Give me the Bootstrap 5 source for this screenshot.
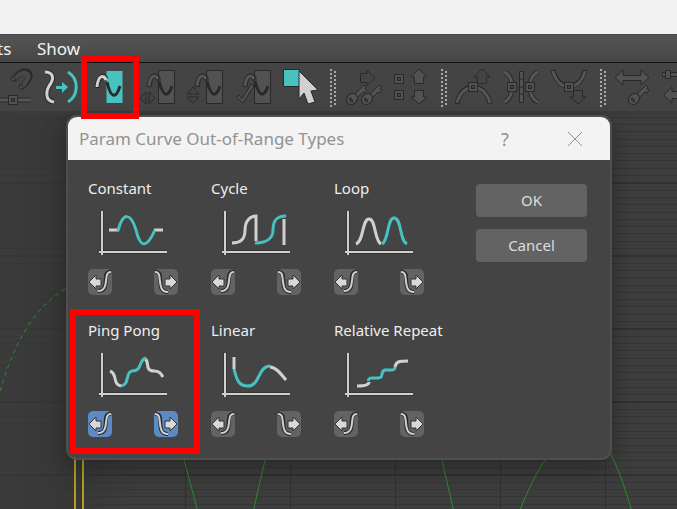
<!DOCTYPE html>
<html lang="en">
<head>
<meta charset="utf-8">
<meta name="viewport" content="width=device-width, initial-scale=1">
<title>Param Curve Out-of-Range Types</title>
<link href="https://cdn.jsdelivr.net/npm/bootstrap@5.3.0/dist/css/bootstrap.min.css" rel="stylesheet">
<style>
body{background:#3b3b3b;font-family:"Noto Sans","Open Sans",sans-serif;font-size:15px;color:#eee}
.window-strip{height:34px;background:#f2f2f2}
.menu-strip{height:29px;background:linear-gradient(#555,#464646);border-top:1px solid #484848;border-bottom:1px solid #111}
.menu-strip a{font-size:17px;line-height:27px;color:#f2f2f2}
.menu-strip a:first-child{width:37px;text-indent:-3px}
.tool-strip{height:52px;background:linear-gradient(#444 0 48px,#3b3b3b 48px)}
.tool-row{margin-left:-12px}
.tool{width:48px;height:48px}
.tool svg,.divider svg{display:block;fill:none}
.divider{width:15px}
.w{stroke:#d0d0d0}.t{stroke:#48c1c1}.k{stroke:#292929}.g{stroke:#555}
.fw{fill:#d0d0d0}.ft{fill:#48c1c1}.fg{fill:#525252}.fd{fill:#444}
.s1{stroke-width:1}.s3{stroke-width:3}.s5{stroke-width:5}
.editor{overflow:hidden}
.graph-bg{position:absolute;top:0;left:0}
.red-frame{position:absolute;border:6px solid #f00;pointer-events:none;z-index:5}
.tool-frame{inset:-8px -7px -8px -3px}
.cell-frame{inset:-9px 11px 6px -18px}
.tool-window{position:absolute;left:66px;top:115px;width:546px;background:#444;border:2px solid #4f4f4f;border-radius:11px;box-shadow:0 10px 24px rgba(0,0,0,.3);background-clip:padding-box}
.title-row{height:43px;background:#f3f3f3;border-radius:9px 9px 0 0;padding:0 24px 0 11px}
.title-row h1{font-size:17px;line-height:42px;color:#929292;font-weight:400}
.title-row button{color:#929292;width:22px;height:40px;font-size:18px;line-height:40px}
.title-row .help-btn{margin-right:48px}
.window-body{height:298px;padding:16px 23px 0 20px}
.types{display:grid;grid-template-columns:repeat(3,123px);grid-auto-rows:142px}
.type-cell{min-width:0}
.type-cell h2{font-size:15px;line-height:24px;margin:0 0 11px;font-weight:400;white-space:nowrap}
.plot{display:block;margin:0 0 14px 11px;fill:none}
.dir{width:24px;height:26px;background:#636363;border-radius:5px}
.dir.on{background:#5d8ac4}
.dir svg{display:block}
.dirs{gap:42px}
.dlg-btn{width:111px;height:33px;background:#636363;color:#ddd;border-radius:4px;font-size:15px;line-height:33px}
.actions{gap:12px;padding-top:8px}
</style>
</head>
<body class="d-flex flex-column min-vh-100 position-relative">
<svg width="0" height="0" class="position-absolute" aria-hidden="true">
<defs>
<g id="axes"><path d="M3 0V45M0 41H68" stroke="#272727" stroke-width="4" opacity=".5"/><path d="M3 0V44M0 41H68" stroke="#d0d0d0" stroke-width="2"/></g>
<g id="pre" fill="none"><path d="M23 3C12 2 24 22 10 22" stroke="#292929" stroke-width="4"/><path d="M23 3C14 2 23 22 10 22" stroke="#d0d0d0" stroke-width="2"/><path d="M1 13L8 6V10H13V17H8V20Z" fill="#d8d8d8" stroke="#333"/></g>
<g id="post" fill="none"><path d="M1 3C12 2 0 23 14 23" stroke="#292929" stroke-width="4"/><path d="M1 3C10 2 1 23 14 23" stroke="#d0d0d0" stroke-width="2"/><path d="M23 13L16 6V10H11V17H16V20Z" fill="#d8d8d8" stroke="#333"/></g>
<g id="key"><path d="M9 12L19 2L21 4L20 6L22 7L20 10L18 9L12 15" class="k fg"/><ellipse cx="7" cy="16" rx="6" ry="5" transform="rotate(-45 7 16)" class="k fg"/><ellipse cx="6" cy="17" rx="2" ry="1" transform="rotate(45 6 17)" class="k fd"/></g>
<g id="knot"><rect x=".5" y=".5" width="9" height="9" class="k fg" stroke-width="1"/><rect x="3.5" y="3.5" width="3" height="3" class="k fd"/></g>
<g id="dots"><path d="M7 6V44" stroke="#aaa" stroke-width="2" stroke-dasharray="2 2"/><path d="M11 8V44" stroke="#aaa" stroke-width="2" stroke-dasharray="2 2"/></g>
<linearGradient id="shade"><stop offset="0" stop-color="#3a3a3a" stop-opacity=".6"/><stop offset=".1" stop-color="#353535" stop-opacity=".75"/><stop offset=".2" stop-color="#353535" stop-opacity="0"/></linearGradient>
<pattern id="rules" width="105" height="73" x="80" y="-6" patternUnits="userSpaceOnUse">
<path d="M0 8.5H105M0 15.5H105M0 22.500H105M0 30.500H105M0 37.500H105M0 44.500H105M0 51.500H105M0 59.500H105M0 66.500H105" stroke="#343434"/><path d="M0 1H105" stroke="#303030" stroke-width="2"/><path d="M.5 0V73" stroke="#2f2f2f"/></pattern>
</defs></svg>

<header class="window-strip"></header>
<nav class="menu-strip d-flex" aria-label="Menu"><a href="#" class="text-decoration-none">ts</a><a href="#" class="text-decoration-none">Show</a></nav>
<div class="tool-strip">
<div class="tool-row d-flex" role="toolbar" aria-label="Curve tools">
<button class="tool btn p-0 border-0 flex-shrink-0" aria-label="Snap"><svg width="48" height="48" viewBox="-12 63 48 48"><path d="M13 80L20 73C26 68 33 74 28 80L21 88" class="k" stroke-width="6"/><path d="M14 79L20 74C26 70 31 75 27 80L22 87" stroke="#484848" stroke-width="4"/><circle cx="13" cy="79" r="2" class="k fg"/><circle cx="21" cy="87" r="2" class="k fg"/><path d="M0 100H31" class="k s5"/><path d="M0 100H31" class="g s3"/><use href="#knot" x="8" y="95"/></svg></button>
<button class="tool btn p-0 border-0 flex-shrink-0" aria-label="Region"><svg width="48" height="48" viewBox="36 63 48 48"><path d="M45 72C53 72 54 78 51 83C45 91 45 101 54 102" class="k s5"/><path d="M45 72C53 72 54 78 51 83C45 91 45 101 54 102" class="w s3"/><path d="M68 72C79 79 79 95 68 102" class="t s3"/><path d="M56 86H62V82L68 87L62 93V89H56Z" class="ft"/></svg></button>
<div class="position-relative flex-shrink-0"><button class="tool btn p-0 border-0" aria-label="Parameter curve out-of-range types"><svg width="48" height="48" viewBox="84 63 48 48"><path d="M106.500 71H122.500V103H106.500Z" class="ft"/><path d="M97 88C98 75 104 74 106 79" class="k s5"/><path d="M97 87C98 75 104 74 106 80" class="w s3"/><path d="M107 82C111 99 116 99 120 86" class="k s3"/></svg></button><span class="red-frame tool-frame"></span></div>
<button class="tool btn p-0 border-0 flex-shrink-0" aria-label="Scale horizontally"><svg width="48" height="48" viewBox="132 63 48 48"><path d="M158.500 70.500H174.500V103.500H158.500Z" class="k fg"/><path d="M149 87C150 76 155 72 159 80" class="k s5"/><path d="M149 86C150 76 155 73 158 79" class="g s3"/><path d="M159 81C163 97 168 98 172 86" class="k s3"/><path d="M140 98L146 92V104ZM155 98L149 92V104Z" class="k fd"/></svg></button>
<button class="tool btn p-0 border-0 flex-shrink-0" aria-label="Scale vertically"><svg width="48" height="48" viewBox="180 63 48 48"><path d="M206.500 70.500H222.500V103.500H206.500Z" class="k fg"/><path d="M197 87C198 76 203 72 207 80" class="k s5"/><path d="M197 86C198 76 203 73 206 79" class="g s3"/><path d="M207 81C211 97 216 98 220 86" class="k s3"/><path d="M193 87L187 94H199ZM193 103L187 97H199Z" class="k fd"/></svg></button>
<button class="tool btn p-0 border-0 flex-shrink-0" aria-label="Apply curve"><svg width="48" height="48" viewBox="228 63 48 48"><path d="M254.500 70.500H270.500V103.500H254.500Z" class="k fg"/><path d="M245 87C246 76 251 72 255 80" class="k s5"/><path d="M245 86C246 76 251 73 254 79" class="g s3"/><path d="M255 81C259 97 264 98 268 86" class="k s3"/><path d="M236 97L239 95L242 99L251 84L254 86L243 103Z" class="k fg"/></svg></button>
<button class="tool btn p-0 border-0 flex-shrink-0" aria-label="Select"><svg width="48" height="48" viewBox="276 63 48 48"><path d="M283.500 69.500H299.500V86.500H283.500Z" class="ft k"/><path d="M299 71L318 90L311 91L315 102L308 104L304 93L299 99Z" class="fw k"/></svg></button>
<div class="divider flex-shrink-0"><svg width="15" height="48"><use href="#dots"/></svg></div>
<button class="tool btn p-0 border-0 flex-shrink-0" aria-label="Copy keys"><svg width="48" height="48" viewBox="339 63 48 48"><path d="M360.500 73.500H367V70L375 78L367 85.500V82.500H360.500Z" class="k fd"/><use href="#key" x="345" y="83"/><use href="#key" x="360" y="83"/></svg></button>
<button class="tool btn p-0 border-0 flex-shrink-0" aria-label="Move keys"><svg width="48" height="48" viewBox="387 63 48 48"><use href="#knot" x="394" y="74"/><use href="#knot" x="394" y="90"/><path d="M419 69L427 77H423.500V83.500H414.500V77H411ZM419 104L411 97H414.500V90.500H423.500V97H427Z" class="k fg"/></svg></button>
<div class="divider flex-shrink-0"><svg width="15" height="48"><use href="#dots"/></svg></div>
<button class="tool btn p-0 border-0 flex-shrink-0" aria-label="Ease peak"><svg width="48" height="48" viewBox="450 63 48 48"><path d="M482 69L490 77H486.500V83.500H477.500V77H474Z" class="k fd"/><path d="M457 104C461 82 485 80 490 104" class="k s5"/><path d="M457 103C462 83 484 81 490 103" class="g s3"/><use href="#knot" x="468" y="82"/></svg></button>
<button class="tool btn p-0 border-0 flex-shrink-0" aria-label="Mirror"><svg width="48" height="48" viewBox="498 63 48 48"><path d="M504 72C515 76 515 98 504 102M538 72C527 76 527 98 538 102" class="k s5"/><path d="M504 72C515 76 515 98 504 102M538 72C527 76 527 98 538 102" class="g s3"/><path d="M519.500 71.500H523.500V102.500H519.500ZM519.500 79H523.500M519.500 87H523.500M519.500 94H523.500" class="k fg"/><use href="#knot" x="507" y="82"/><use href="#knot" x="525" y="82"/></svg></button>
<button class="tool btn p-0 border-0 flex-shrink-0" aria-label="Ease valley"><svg width="48" height="48" viewBox="546 63 48 48"><path d="M578 104L570 97H573.500V90.500H582.500V97H586Z" class="k fd"/><path d="M553 70C558 92 580 92 585 70" class="k s5"/><path d="M553 71C558 92 580 92 585 71" class="g s3"/><use href="#knot" x="564" y="82"/></svg></button>
<div class="divider flex-shrink-0"><svg width="15" height="48"><use href="#dots"/></svg></div>
<button class="tool btn p-0 border-0 flex-shrink-0" aria-label="Stretch keys"><svg width="48" height="48" viewBox="608 63 48 48"><path d="M614 77.500L622 70V75.500H640V70L648 77.500L640 85V80.500H622V85Z" class="k fg"/><use href="#key" x="626" y="83"/></svg></button>
<button class="tool btn p-0 border-0 flex-shrink-0" aria-label="Slide keys"><svg width="48" height="48" viewBox="656 63 48 48"><path d="M661.500 72.500H664.500V76.500H661.500ZM664.500 70.500H669.500V78.500H664.500ZM669.500 72.500H680V76.500H669.500Z" class="k fg"/><path d="M663 95L671 87V91.500H685V98.500H671V103Z" class="k fg"/></svg></button>
</div>
</div>

<main class="editor flex-grow-1 position-relative">
<svg class="graph-bg" width="100%" height="100%" fill="none" aria-label="Animation curves">
<rect width="100%" height="100%" fill="#3d3d3d"/><rect width="100%" height="100%" fill="url(#rules)" opacity=".9"/><rect width="100%" height="100%" fill="url(#shade)"/>
<g transform="translate(0 -115)">
<path d="M75 455V1000M83 455V1000" stroke="#b39d22" stroke-width="2"/>
<path d="M0 391C14 345 32 307 70 286" stroke="#2c8c2c" stroke-dasharray="4 4"/>
<path d="M183 456L198 512M266 456L253 512M441 456L454 512M550 454C538 468 529 488 519 512M605 444C617 463 625 488 632 512" stroke="#2c8c2c"/>
</g></svg>
</main>

<section class="tool-window" role="dialog" aria-labelledby="dlg-title">
<header class="title-row d-flex align-items-center"><h1 id="dlg-title" class="m-0 me-auto text-nowrap">Param Curve Out-of-Range Types</h1>
<button class="btn help-btn p-0 border-0" aria-label="Help">?</button>
<button class="btn p-0 border-0 d-flex align-items-center justify-content-center" aria-label="Close"><svg width="16" height="16"><path d="M1 1L15 15M15 1L1 15" stroke="#929292" stroke-width="1"/></svg></button></header>
<div class="window-body d-flex justify-content-between">
<div class="types">
<div class="type-cell"><h2>Constant</h2><svg class="plot" width="68" height="44"><use href="#axes"/><path d="M10 19H20M55 19H64" class="w s3"/><path d="M19 20C24 0 32 2 37 19C41 36 47 39 56 19" class="t s3"/></svg><div class="d-flex dirs"><button class="dir btn p-0 border-0" aria-label="Constant before"><svg width="24" height="26"><use href="#pre"/></svg></button><button class="dir btn p-0 border-0" aria-label="Constant after"><svg width="24" height="26"><use href="#post"/></svg></button></div></div>
<div class="type-cell"><h2>Cycle</h2><svg class="plot" width="68" height="44"><use href="#axes"/><path d="M10 32C20 32 23 27 23 19C23 9 29 5 34 5V30M62 8V34" class="w s3"/><path d="M33 32C46 32 51 26 51 19C51 9 55 5 64 5" class="t s3"/></svg><div class="d-flex dirs"><button class="dir btn p-0 border-0" aria-label="Cycle before"><svg width="24" height="26"><use href="#pre"/></svg></button><button class="dir btn p-0 border-0" aria-label="Cycle after"><svg width="24" height="26"><use href="#post"/></svg></button></div></div>
<div class="type-cell"><h2>Loop</h2><svg class="plot" width="68" height="44"><use href="#axes"/><path d="M11 33C19 30 17 8 24 8C31 8 29 29 36 33" class="w s3"/><path d="M37 33C44 29 42 7 49 7C57 7 54 29 62 33" class="t s3"/></svg><div class="d-flex dirs"><button class="dir btn p-0 border-0" aria-label="Loop before"><svg width="24" height="26"><use href="#pre"/></svg></button><button class="dir btn p-0 border-0" aria-label="Loop after"><svg width="24" height="26"><use href="#post"/></svg></button></div></div>
<div class="type-cell position-relative"><h2>Ping Pong</h2><svg class="plot" width="68" height="44"><use href="#axes"/><path d="M11 18C19 21 13 31 22 33M46 6C51 8 45 18 55 18C61 18 62 21 64 24" class="w s3"/><path d="M22 33C31 32 26 19 33 18C44 18 39 7 47 5" class="t s3"/></svg><div class="d-flex dirs"><button class="dir on btn p-0 border-0" aria-pressed="true" aria-label="Ping Pong before"><svg width="24" height="26"><use href="#pre"/></svg></button><button class="dir on btn p-0 border-0" aria-pressed="true" aria-label="Ping Pong after"><svg width="24" height="26"><use href="#post"/></svg></button></div><span class="red-frame cell-frame"></span></div>
<div class="type-cell"><h2>Linear</h2><svg class="plot" width="68" height="44"><use href="#axes"/><path d="M12 4V16M48 14C54 14 59 21 64 27" class="w s3"/><path d="M12 16C15 28 17 33 26 33C38 33 36 13 48 13" class="t s3"/></svg><div class="d-flex dirs"><button class="dir btn p-0 border-0" aria-label="Linear before"><svg width="24" height="26"><use href="#pre"/></svg></button><button class="dir btn p-0 border-0" aria-label="Linear after"><svg width="24" height="26"><use href="#post"/></svg></button></div></div>
<div class="type-cell"><h2>Relative Repeat</h2><svg class="plot" width="68" height="44"><use href="#axes"/><path d="M12 33C20 33 24 32 24 29M50 14C51 8 55 8 63 8" class="w s3"/><path d="M23 28C24 24 27 25 33 25C40 25 34 19 40 17C45 17 50 18 50 14" class="t s3"/></svg><div class="d-flex dirs"><button class="dir btn p-0 border-0" aria-label="Relative Repeat before"><svg width="24" height="26"><use href="#pre"/></svg></button><button class="dir btn p-0 border-0" aria-label="Relative Repeat after"><svg width="24" height="26"><use href="#post"/></svg></button></div></div>
</div>
<div class="actions d-flex flex-column"><button class="dlg-btn btn p-0 border-0">OK</button><button class="dlg-btn btn p-0 border-0">Cancel</button></div>
</div>
</section>
<script src="https://cdn.jsdelivr.net/npm/bootstrap@5.3.0/dist/js/bootstrap.bundle.min.js"></script>
</body>
</html>
